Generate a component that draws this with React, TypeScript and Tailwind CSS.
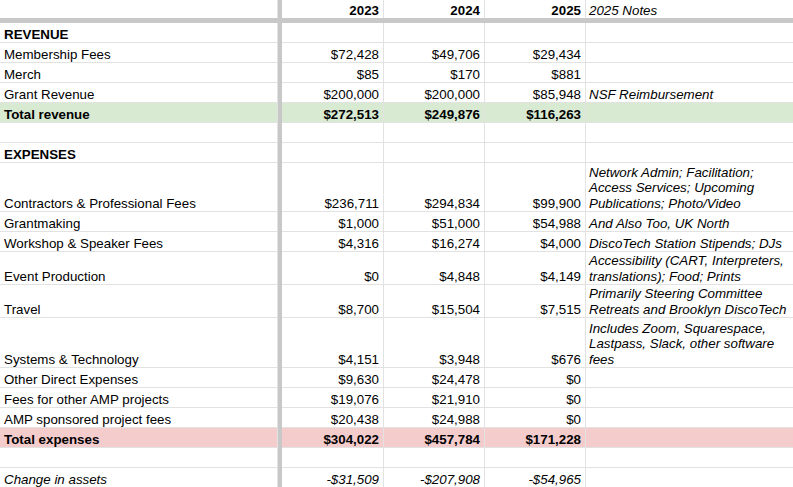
import React from 'react';
import clsx from 'clsx';

type Line = {
  label?: string;
  values?: string[];
  notes?: string[];
  h?: string;
  bg?: string;
  bold?: boolean;
  italic?: boolean;
};

const rows: Line[] = [
  { label: 'REVENUE', bold: true },
  { label: 'Membership Fees', values: ['$72,428', '$49,706', '$29,434'] },
  { label: 'Merch', values: ['$85', '$170', '$881'] },
  { label: 'Grant Revenue', values: ['$200,000', '$200,000', '$85,948'], notes: ['NSF Reimbursement'] },
  { label: 'Total revenue', values: ['$272,513', '$249,876', '$116,263'], bold: true, bg: 'bg-[#d9ead3]' },
  {},
  { label: 'EXPENSES', bold: true },
  {
    label: 'Contractors & Professional Fees',
    values: ['$236,711', '$294,834', '$99,900'],
    notes: ['Network Admin; Facilitation;', 'Access Services; Upcoming', 'Publications; Photo/Video'],
    h: 'h-[49px]',
  },
  { label: 'Grantmaking', values: ['$1,000', '$51,000', '$54,988'], notes: ['And Also Too, UK North'] },
  { label: 'Workshop & Speaker Fees', values: ['$4,316', '$16,274', '$4,000'], notes: ['DiscoTech Station Stipends; DJs'] },
  {
    label: 'Event Production',
    values: ['$0', '$4,848', '$4,149'],
    notes: ['Accessibility (CART, Interpreters,', 'translations); Food; Prints'],
    h: 'h-[33px]',
  },
  {
    label: 'Travel',
    values: ['$8,700', '$15,504', '$7,515'],
    notes: ['Primarily Steering Committee', 'Retreats and Brooklyn DiscoTech'],
    h: 'h-[33px]',
  },
  {
    label: 'Systems & Technology',
    values: ['$4,151', '$3,948', '$676'],
    notes: ['Includes Zoom, Squarespace,', 'Lastpass, Slack, other software', 'fees'],
    h: 'h-[50px]',
  },
  { label: 'Other Direct Expenses', values: ['$9,630', '$24,478', '$0'] },
  { label: 'Fees for other AMP projects', values: ['$19,076', '$21,910', '$0'] },
  { label: 'AMP sponsored project fees', values: ['$20,438', '$24,988', '$0'] },
  { label: 'Total expenses', values: ['$304,022', '$457,784', '$171,228'], bold: true, bg: 'bg-[#f4cccc]' },
  {},
  { label: 'Change in assets', values: ['-$31,509', '-$207,908', '-$54,965'], italic: true },
];

const cell = 'flex shrink-0 items-end border-r border-b border-[#e2e2e2]';

function Row({ label, values = ['', '', ''], notes = [], h = 'h-[20px]', bg, bold, italic }: Line) {
  return (
    <div className={clsx('flex', h, bg, bold && 'font-bold', italic && 'italic')}>
      <div className={clsx(cell, 'w-[278px] pl-[4px]')}>{label}</div>
      <div className="w-[4px] shrink-0 bg-[#c8c8c8]" />
      <div className={clsx(cell, 'w-[102px] justify-end pr-[4px]')}>{values[0]}</div>
      <div className={clsx(cell, 'w-[101px] justify-end pr-[4px]')}>{values[1]}</div>
      <div className={clsx(cell, 'w-[101px] justify-end pr-[4px]')}>{values[2]}</div>
      <div className="flex flex-1 flex-col justify-end border-b border-[#e2e2e2] pl-[3px] font-normal italic">
        {notes.map((n) => (
          <div key={n} className="whitespace-nowrap">{n}</div>
        ))}
      </div>
    </div>
  );
}

export default function App() {
  return (
    <div className="h-[487px] w-[793px] overflow-hidden bg-white text-[13.33px] leading-[15.5px] text-black [font-family:'Liberation_Sans',Arial,sans-serif]">
      {/* Header */}
      <div className="flex h-[18px] font-bold">
        <div className="flex w-[278px] shrink-0 border-r border-[#e2e2e2]" />
        <div className="w-[4px] shrink-0 bg-[#c8c8c8]" />
        <div className="flex w-[102px] shrink-0 items-end justify-end border-r border-[#e2e2e2] pr-[4px]">2023</div>
        <div className="flex w-[101px] shrink-0 items-end justify-end border-r border-[#e2e2e2] pr-[4px]">2024</div>
        <div className="flex w-[101px] shrink-0 items-end justify-end border-r border-[#e2e2e2] pr-[4px]">2025</div>
        <div className="flex flex-1 items-end pl-[3px] font-normal italic">2025 Notes</div>
      </div>
      <div className="h-[5px] bg-[#c8c8c8]" />
      {rows.map((r, i) => (
        <Row key={i} {...r} />
      ))}
    </div>
  );
}
